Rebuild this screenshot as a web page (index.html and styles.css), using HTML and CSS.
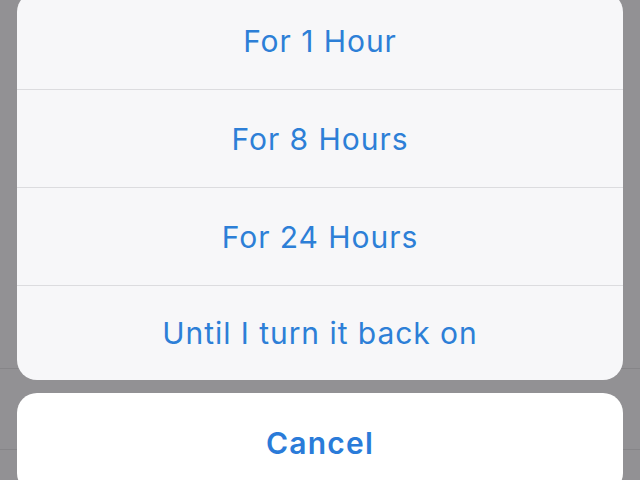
FILE: index.html
```html
<!DOCTYPE html>
<html lang="en">
<head>
<meta charset="utf-8">
<title>Mute options</title>
<link rel="stylesheet" href="styles.css">
</head>
<body>
<div class="sheet">
  <div class="group">
    <div class="option">For 1 Hour</div>
    <div class="option">For 8 Hours</div>
    <div class="option">For 24 Hours</div>
    <div class="option last">Until I turn it back on</div>
  </div>
  <div class="cancel">Cancel</div>
</div>
</body>
</html>
```
FILE: styles.css
```css
html, body {
  margin: 0;
  padding: 0;
  height: 100%;
  overflow: hidden;
}
body {
  background-color: #929194;
  background-image:
    linear-gradient(to bottom, transparent 368px, #868588 368px, #868588 369px, transparent 369px),
    linear-gradient(to bottom, transparent 449px, #868588 449px, #868588 450px, transparent 450px);
  font-family: Inter, "Liberation Sans", sans-serif;
}
.sheet {
  display: flex;
  flex-direction: column;
  gap: 13px;
  padding: 0 17px;
}
.group {
  margin-top: -8px;
  background: #f7f7f9;
  border-radius: 20px;
  overflow: hidden;
  display: flex;
  flex-direction: column;
}
.option {
  height: 97px;
  border-bottom: 1px solid #dcdcdf;
  display: flex;
  align-items: center;
  justify-content: center;
  color: #2d7fd7;
  font-size: 30px;
  letter-spacing: 0.95px;
}
.option.last {
  height: 94px;
  border-bottom: none;
}
.cancel {
  height: 100px;
  background: #ffffff;
  border-radius: 20px;
  display: flex;
  align-items: center;
  justify-content: center;
  color: #2a7bd9;
  font-size: 30px;
  font-weight: 600;
  letter-spacing: 1.2px;
}
```
